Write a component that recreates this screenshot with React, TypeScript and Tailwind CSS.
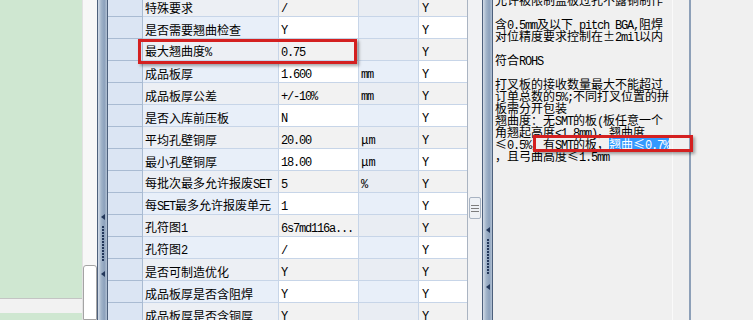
const rows: [string, string, string, string][] = [
  ["特殊要求", "/", "", "Y"],
  ["是否需要翘曲检查", "Y", "", "Y"],
  ["最大翘曲度%", "0.75", "", "Y"],
  ["成品板厚", "1.600", "mm", "Y"],
  ["成品板厚公差", "+/-10%", "mm", "Y"],
  ["是否入库前压板", "N", "", "Y"],
  ["平均孔壁铜厚", "20.00", "μm", "Y"],
  ["最小孔壁铜厚", "18.00", "μm", "Y"],
  ["每批次最多允许报废SET", "5", "%", "Y"],
  ["每SET最多允许报废单元", "1", "", "Y"],
  ["孔符图1", "6s7md116a...", "", "Y"],
  ["孔符图2", "/", "", "Y"],
  ["是否可制造优化", "Y", "", "Y"],
  ["成品板厚是否含阻焊", "Y", "", "Y"],
  ["成品板厚是否含铜厚", "Y", "", "Y"],
];

const notes = [
  "允许被限制盖板过孔不露铜制作",
  "",
  "含0.5mm及以下 pitch BGA,阻焊",
  "对位精度要求控制在±2mil以内",
  "",
  "符合ROHS",
  "",
  "打叉板的接收数量最大不能超过",
  "订单总数的5%;不同打叉位置的拼",
  "板需分开包装",
  "翘曲度：无SMT的板(板任意一个",
  "角翘起高度<1.8mm)，翘曲度",
];

// SimSun-like text: half width latin, full width CJK
function T({ s }: { s: string }) {
  const parts = s.match(/[\x20-\x7e]+|[^\x20-\x7e]+/g) ?? [];
  return (
    <span className="whitespace-pre leading-[12px]">
      {parts.map((p, i) =>
        /[\x20-\x7e]/.test(p[0]) ? (
          <span key={i} className="font-['Liberation_Mono',monospace] text-[12px] tracking-[-1.2px]">
            {p}
          </span>
        ) : (
          <span key={i} className="text-[12px]">
            {p}
          </span>
        )
      )}
    </span>
  );
}

function Arrow() {
  return <div className="w-0 h-0 border-y-[3px] border-y-transparent border-r-[4px] border-r-[#23375a]" />;
}

function Splitter({ pad }: { pad: string }) {
  return (
    <div className="w-[11px] h-full flex flex-col items-center border-x border-[#4d607c] bg-[linear-gradient(90deg,#d3dce8_0%,#a3b5ca_35%,#8ca1bc_70%,#b3c2d4_100%)]">
      <div className={pad} />
      <Arrow />
      <div className="flex flex-col gap-[1px] my-[6px]">
        {Array.from({ length: 12 }).map((_, i) => (
          <div key={i} className="w-[2px] h-[2px] bg-[#23375a]" />
        ))}
      </div>
      <div className="mt-[4px]">
        <Arrow />
      </div>
    </div>
  );
}

export default function App() {
  return (
    <div className="relative w-[753px] h-[320px] overflow-hidden flex bg-[#f0f0f0] text-black font-['Noto_Sans_CJK_SC',sans-serif]">
      {/* left pane */}
      <div className="w-[82px] h-full flex flex-col bg-[#cfe7d1]">
        <div className="h-[298px]" />
        <div className="h-[15px] bg-[#f2f2f2] border-t border-[#c4c4c4]" />
      </div>
      <div className="w-[15px] h-full flex flex-col bg-[#f7f7f7] border-l border-[#e2e2e2]">
        <div className="h-[265px]" />
        <div className="flex-1 bg-white border border-[#a4a4a4] rounded-t-[3px]" />
      </div>

      <Splitter pad="h-[214px]" />

      {/* grid */}
      <div className="w-[359px] h-full overflow-hidden bg-white">
        <div className="-mt-[5px]">
          {rows.map(([name, value, unit, flag], i) => {
            const odd = i % 2 === 0;
            return (
              <div key={name} className="flex h-[22px]">
                <div className="w-[35px] bg-[#dbe5f3] border-b border-r border-[#a9bbd2]" />
                <div
                  className={`w-[136px] flex items-center pl-[2px] pt-[2px] whitespace-nowrap overflow-hidden border-b border-r border-[#c7d5e8] ${
                    odd ? "bg-[#eceff4]" : "bg-[#e8eff9]"
                  }`}
                >
                  <T s={name} />
                </div>
                <div
                  className={`w-[80px] flex items-center pl-[2px] pt-[2px] whitespace-nowrap border-b border-r border-[#c7d5e8] ${
                    odd ? "bg-[#f2f2f2]" : "bg-white"
                  }`}
                >
                  <T s={value} />
                </div>
                <div
                  className={`w-[60px] flex items-center pl-[2px] pt-[2px] whitespace-nowrap border-b border-r border-[#c7d5e8] ${
                    odd ? "bg-[#e9edf3]" : "bg-[#e8eff9]"
                  }`}
                >
                  <T s={unit} />
                </div>
                <div
                  className={`w-[48px] flex items-center pl-[3px] pt-[2px] border-b border-[#c7d5e8] ${
                    odd ? "bg-[#f2f2f2]" : "bg-white"
                  }`}
                >
                  <T s={flag} />
                </div>
              </div>
            );
          })}
        </div>
      </div>

      {/* grid scrollbar */}
      <div className="w-[15px] h-full flex flex-col bg-[#f1f2f4] border-l border-[#aab4c2]">
        <div className="h-[197px]" />
        <div className="h-[22px] mx-[1px] flex flex-col items-center justify-center gap-[2px] border border-[#a8b3c2] rounded-[2px] bg-[#eef1f5]">
          <div className="w-[8px] h-px bg-[#7d7d7d]" />
          <div className="w-[8px] h-px bg-[#7d7d7d]" />
          <div className="w-[8px] h-px bg-[#7d7d7d]" />
        </div>
      </div>

      <Splitter pad="h-[227px]" />

      {/* notes */}
      <div className="w-[179px] h-full overflow-hidden bg-[#f0f0f0] pl-[2px]">
        <div className="-mt-[8px]">
          {notes.map((line, i) => (
            <div key={i} className="h-[12px] leading-[12px] whitespace-nowrap">
              <T s={line} />
            </div>
          ))}
          <div className="h-[12px] leading-[12px] whitespace-nowrap">
            <T s="≤0.5%，有SMT的板，" />
            <span className="inline-block h-[13px] leading-[13px] align-top bg-[#3399ff] text-white">
              <T s="翘曲≤0.7%" />
            </span>
          </div>
          <div className="h-[12px] leading-[12px] whitespace-nowrap">
            <T s="，且弓曲高度≤1.5mm" />
          </div>
        </div>
      </div>

      <div className="w-[17px] h-full border-l border-[#fafafa] bg-[#f0f0f0]" />
      <div className="w-[2px] h-full bg-[#8da0b8]" />
      <div className="flex-1 h-full bg-[#f0f0f0]" />

      {/* highlight boxes */}
      <div className="absolute left-[138px] top-[39px] w-[219px] h-[25px] border-[3px] border-[#d42020] shadow-[2px_2px_3px_rgba(0,0,0,0.35)]" />
      <div className="absolute left-[533px] top-[135px] w-[160px] h-[17px] border-[3px] border-[#d42020] shadow-[2px_2px_3px_rgba(0,0,0,0.35)]" />
    </div>
  );
}
